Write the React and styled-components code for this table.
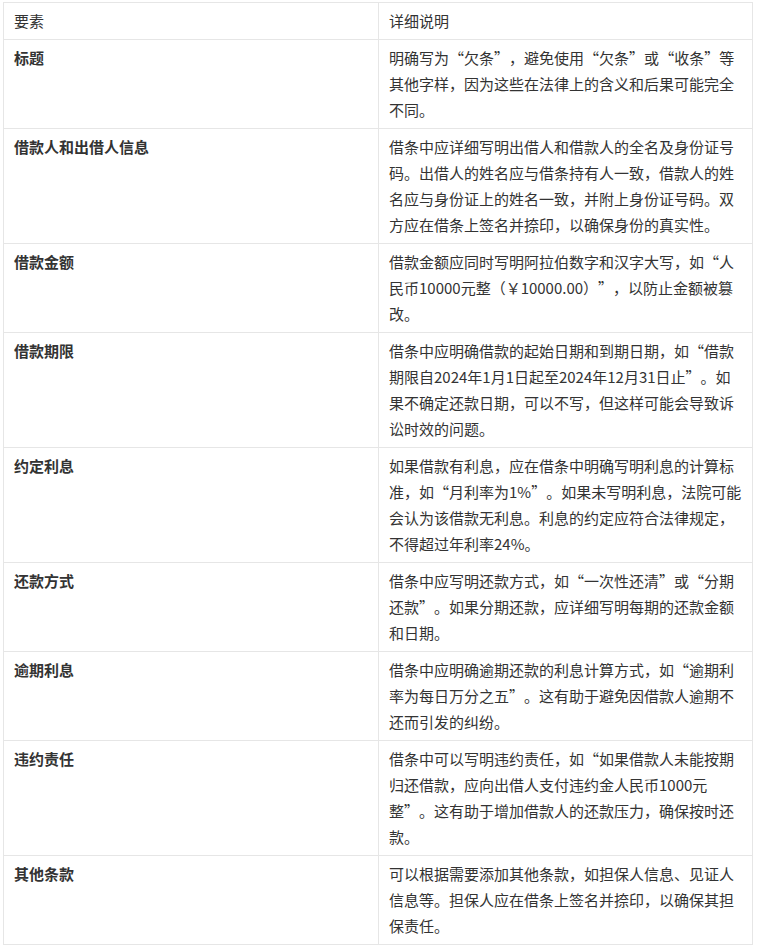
import React from 'react'
import styled, { createGlobalStyle } from 'styled-components'

const rows = [
  ['标题', '明确写为“欠条”，避免使用“欠条”或“收条”等其他字样，因为这些在法律上的含义和后果可能完全不同。'],
  ['借款人和出借人信息', '借条中应详细写明出借人和借款人的全名及身份证号码。出借人的姓名应与借条持有人一致，借款人的姓名应与身份证上的姓名一致，并附上身份证号码。双方应在借条上签名并捺印，以确保身份的真实性。'],
  ['借款金额', '借款金额应同时写明阿拉伯数字和汉字大写，如“人民币10000元整（￥10000.00）”，以防止金额被篡改。'],
  ['借款期限', '借条中应明确借款的起始日期和到期日期，如“借款期限自2024年1月1日起至2024年12月31日止”。如果不确定还款日期，可以不写，但这样可能会导致诉讼时效的问题。'],
  ['约定利息', '如果借款有利息，应在借条中明确写明利息的计算标准，如“月利率为1%”。如果未写明利息，法院可能会认为该借款无利息。利息的约定应符合法律规定，不得超过年利率24%。'],
  ['还款方式', '借条中应写明还款方式，如“一次性还清”或“分期还款”。如果分期还款，应详细写明每期的还款金额和日期。'],
  ['逾期利息', '借条中应明确逾期还款的利息计算方式，如“逾期利率为每日万分之五”。这有助于避免因借款人逾期不还而引发的纠纷。'],
  ['违约责任', '借条中可以写明违约责任，如“如果借款人未能按期归还借款，应向出借人支付违约金人民币1000元整”。这有助于增加借款人的还款压力，确保按时还款。'],
  ['其他条款', '可以根据需要添加其他条款，如担保人信息、见证人信息等。担保人应在借条上签名并捺印，以确保其担保责任。'],
]

const Global = createGlobalStyle`
  body {
    margin: 0;
    background: #fff;
    font-family: "Noto Sans CJK SC", "Noto Sans", sans-serif;
  }
`

const Page = styled.div`
  padding: 2px 0 0 3px;
`

const Grid = styled.div`
  display: grid;
  grid-template-columns: 375px 374px;
  width: 749px;
  border-top: 1px solid #e6e6e6;
  border-left: 1px solid #e6e6e6;
  color: #333;
  font-size: 15px;
  line-height: 26px;
  text-spacing-trim: space-all;
`

const Cell = styled.div`
  border-right: 1px solid #e6e6e6;
  border-bottom: 1px solid #e6e6e6;
  padding: 5px 10px;
  font-weight: ${({ $bold }) => ($bold ? 700 : 400)};
  word-break: break-all;
`

const NoBreak = styled.span`
  white-space: nowrap;
`

// full-width curly quotes: one em wide, open quote sits right, close quote left
const Quote = styled.span`
  display: inline-block;
  width: 1em;
  text-align: ${({ $open }) => ($open ? 'right' : 'left')};
`

const renderText = (text) =>
  text.split(/(“.|.”[，。]?)/).map((part, i) => {
    if (!part.includes('“') && !part.includes('”')) return part
    return (
      <NoBreak key={i}>
        {part.split(/([“”])/).map((p, j) =>
          p === '“' || p === '”' ? (
            <Quote key={j} $open={p === '“'}>{p}</Quote>
          ) : (
            p
          )
        )}
      </NoBreak>
    )
  })

const App = () => {
  return (
    <Page>
      <Global />
      <Grid>
        <Cell>要素</Cell>
        <Cell>详细说明</Cell>
        {rows.map(([k, v]) => (
          <React.Fragment key={k}>
            <Cell $bold>{k}</Cell>
            <Cell>{renderText(v)}</Cell>
          </React.Fragment>
        ))}
      </Grid>
    </Page>
  )
}

export default App
